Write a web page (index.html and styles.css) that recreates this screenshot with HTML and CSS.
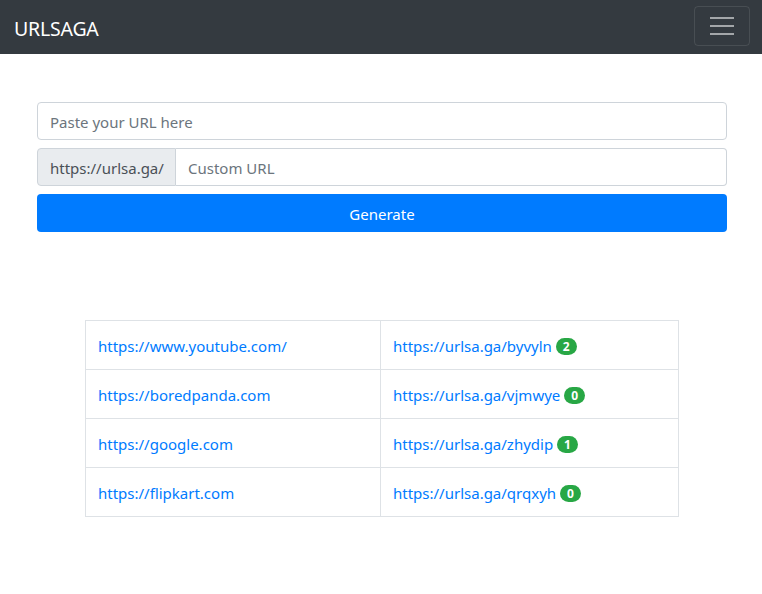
FILE: index.html
```html
<!DOCTYPE html>
<html>
<head>
<meta charset="utf-8">
<link rel="stylesheet" href="styles.css">
</head>
<body>
<nav class="navbar">
  <a class="brand" href="#">URLSAGA</a>
  <button class="toggler"><span class="bar"></span><span class="bar"></span><span class="bar"></span></button>
</nav>
<main class="container">
  <form class="form">
    <input class="control" type="text" placeholder="Paste your URL here">
    <div class="group">
      <span class="prefix">https://urlsa.ga/</span>
      <input class="control group-input" type="text" placeholder="Custom URL">
    </div>
    <button class="btn" type="button">Generate</button>
  </form>
  <table class="table">
    <tr><td><a href="#">https://www.youtube.com/</a></td><td><a href="#">https://urlsa.ga/byvyln</a> <span class="badge">2</span></td></tr>
    <tr><td><a href="#">https://boredpanda.com</a></td><td><a href="#">https://urlsa.ga/vjmwye</a> <span class="badge">0</span></td></tr>
    <tr><td><a href="#">https://google.com</a></td><td><a href="#">https://urlsa.ga/zhydip</a> <span class="badge">1</span></td></tr>
    <tr><td><a href="#">https://flipkart.com</a></td><td><a href="#">https://urlsa.ga/qrqxyh</a> <span class="badge">0</span></td></tr>
  </table>
</main>
</body>
</html>
```
FILE: styles.css
```css
* { box-sizing: border-box; }
body {
  margin: 0;
  font-family: "Noto Sans", "Open Sans", sans-serif;
  font-size: 15px;
  color: #212529;
  background: #fff;
}
.navbar {
  height: 54px;
  background: #343a40;
  display: flex;
  align-items: center;
  justify-content: space-between;
  padding: 0 12px 0 14px;
}
.brand {
  color: #fff;
  text-decoration: none;
  font-size: 19.5px;
  letter-spacing: -0.2px;
  padding-top: 2px;
}
.toggler {
  width: 56px;
  height: 40px;
  background: transparent;
  border: 1px solid rgba(255,255,255,0.1);
  border-radius: 4px;
  display: flex;
  flex-direction: column;
  justify-content: center;
  align-items: center;
  gap: 6px;
  padding: 0;
  margin-top: -2px;
}
.bar {
  display: block;
  width: 24px;
  height: 2px;
  background: rgba(255,255,255,0.55);
}
.container {
  padding: 48px 35px 0 37px;
}
.form {
  display: flex;
  flex-direction: column;
  gap: 8px;
}
.control {
  height: 38px;
  width: 100%;
  border: 1px solid #ced4da;
  border-radius: 4px;
  padding: 2px 12px 0;
  font-family: inherit;
  font-size: 15px;
  color: #495057;
  outline: none;
}
.control::placeholder { color: #6c757d; }
.group {
  display: flex;
  height: 38px;
}
.prefix {
  display: flex;
  align-items: center;
  padding: 2px 12px 0;
  background: #e9ecef;
  border: 1px solid #ced4da;
  border-radius: 4px 0 0 4px;
  color: #495057;
  width: 139px;
  white-space: nowrap;
}
.group-input {
  flex: 1;
  border-left: none;
  border-radius: 0 4px 4px 0;
}
.btn {
  height: 38px;
  border: none;
  border-radius: 4px;
  background: #007bff;
  color: #fff;
  font-family: inherit;
  font-size: 15px;
  padding-top: 2px;
}
.table {
  margin: 88px 0 0 48px;
  width: 594px;
  border-collapse: collapse;
}
.table td {
  border: 1px solid #dee2e6;
  height: 49px;
  padding: 2px 12px 0;
  vertical-align: middle;
}
.table td:first-child { width: 295px; }
.table a {
  color: #007bff;
  text-decoration: none;
}
.badge {
  display: inline-block;
  background: #28a745;
  color: #fff;
  font-size: 12px;
  font-weight: 700;
  line-height: 1;
  padding: 3px 7px 2px;
  border-radius: 10px;
  vertical-align: 1px;
}
```
